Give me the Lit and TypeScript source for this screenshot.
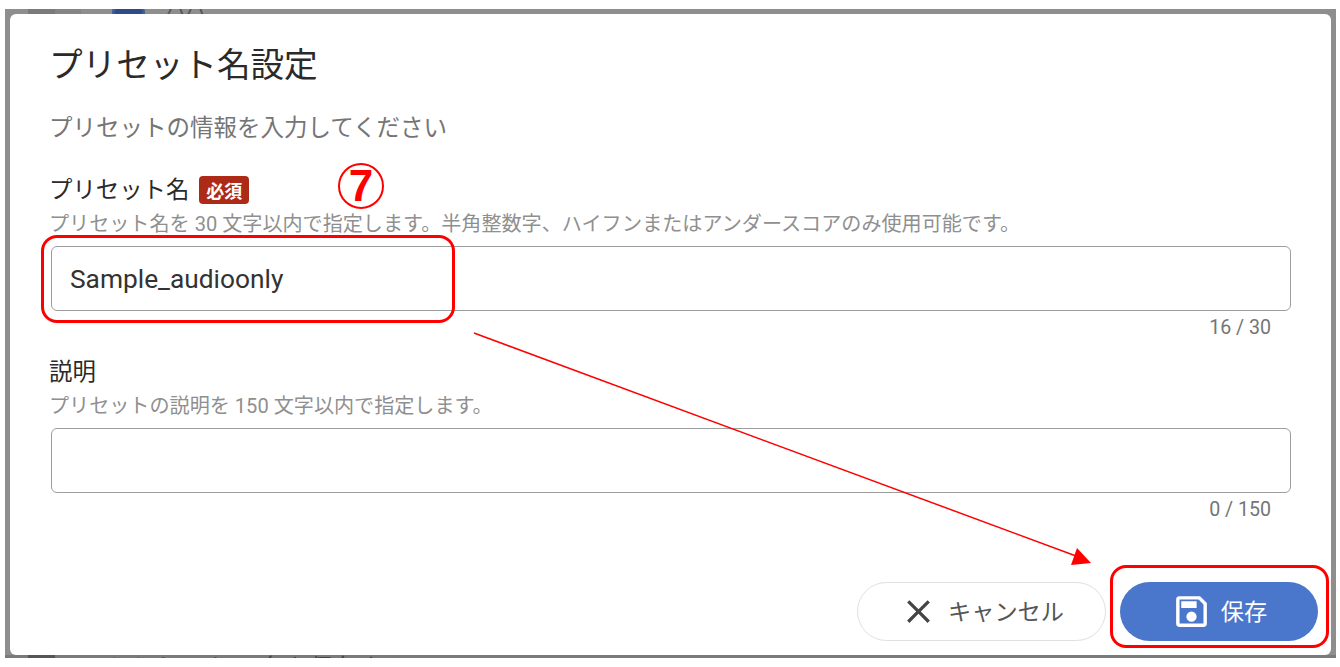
import { LitElement, html, css } from "lit";
import { customElement } from "lit/decorators.js";

@customElement("app-root")
export class AppRoot extends LitElement {
  static styles = css`
    :host {
      display: block;
      width: 1340px;
      height: 667px;
      background: #fff;
      position: relative;
      overflow: hidden;
      font-family: Roboto, "Noto Sans CJK JP", sans-serif;
    }
    .backdrop {
      position: absolute;
      left: 5px;
      top: 9px;
      width: 1331px;
      height: 649px;
      background: #8e8e8e;
      overflow: hidden;
    }
    .behind-top-a { position: absolute; left: 23px; top: 0; width: 27px; height: 5px; background: #7a7a7a; }
    .behind-top-b { position: absolute; left: 50px; top: 0; width: 26px; height: 5px; background: #858585; }
    .behind-top-c { position: absolute; left: 107px; top: -12px; width: 33px; height: 33px; box-sizing: border-box; border-radius: 50%; background: #2f4a86; border: 3px solid #3d5a9c; }
    .behind-top-t { position: absolute; left: 160px; top: -12px; font-size: 20px; line-height: 24px; color: #555; white-space: nowrap; }
    .behind-bottom { position: absolute; left: 0; right: 0; bottom: 0; height: 3px; background: #7a7a7a; overflow: hidden; }
    .behind-bottom-a { position: absolute; left: 23px; top: 0; width: 27px; height: 3px; background: #555; }
    .behind-bottom-t { position: absolute; left: 100px; top: -4px; font-size: 24px; line-height: 34px; color: #444; white-space: nowrap; }
    .dialog {
      position: absolute;
      left: 5px;
      top: 5px;
      width: 1321px;
      height: 641px;
      box-sizing: border-box;
      background: #fff;
      border-radius: 6px;
      padding: 29px 40px 14px 39px;
      display: flex;
      flex-direction: column;
    }
    h1 {
      margin: 0;
      font-size: 33.6px;
      line-height: 46px;
      font-weight: 400;
      color: #2a2a2a;
    }
    .sub {
      margin-top: 23px;
      font-size: 23.5px;
      line-height: 32px;
      color: #757575;
    }
    .label {
      display: flex;
      align-items: center;
      gap: 10px;
      font-size: 23.4px;
      line-height: 32px;
      color: #2a2a2a;
    }
    .label.first { margin-top: 30px; }
    .label.second { margin-top: 16px; }
    .badge {
      width: 50px;
      height: 28px;
      box-sizing: border-box;
      background: #ad2a16;
      color: #fff;
      border-radius: 4px;
      font-size: 18px;
      font-weight: 700;
      display: flex;
      align-items: center;
      justify-content: center;
      font-family: "Noto Sans CJK JP", sans-serif;
    }
    .help {
      font-size: 20.1px;
      line-height: 24px;
      color: #8f8f8f;
      margin-top: 6px;
      white-space: nowrap;
    }
    .field {
      margin-top: 10px;
      margin-left: 2px;
      height: 65px;
      box-sizing: border-box;
      border: 1.5px solid #9e9e9e;
      border-radius: 6px;
      padding: 0 18px;
      display: flex;
      align-items: center;
      font-size: 26.3px;
      color: #333;
    }
    .count {
      text-align: right;
      font-size: 19.6px;
      line-height: 24px;
      color: #757575;
      padding-right: 20px;
      margin-top: 5px;
    }
    .actions {
      margin-top: auto;
      display: flex;
      justify-content: flex-end;
      gap: 14px;
      margin-right: -27px;
    }
    .btn {
      height: 59px;
      border-radius: 30px;
      box-sizing: border-box;
      display: flex;
      align-items: center;
      justify-content: center;
      font-size: 23.2px;
    }
    .btn span { margin-bottom: 4px; }
    .cancel {
      width: 249px;
      border: 1.5px solid #e0e0e0;
      color: #555;
      gap: 10px;
    }
    .save {
      width: 198px;
      background: #4a76cb;
      color: #fff;
      gap: 9px;
    }
    .overlay { position: absolute; left: 0; top: 0; pointer-events: none; }
    .num {
      position: absolute;
      left: 338px;
      top: 163px;
      width: 46px;
      height: 46px;
      box-sizing: border-box;
      border: 2px solid #f00;
      border-radius: 50%;
      color: #f00;
      font-family: "Liberation Sans", sans-serif;
      font-weight: 700;
      font-size: 44px;
      line-height: 42px;
      text-align: center;
    }
    .ring {
      position: absolute;
      box-sizing: border-box;
      border: 3px solid #f00;
      border-radius: 16px;
    }
    .ring.a { left: 41px; top: 235px; width: 414px; height: 88px; }
    .ring.b { left: 1110px; top: 565px; width: 219px; height: 83px; }
  `;

  render() {
    return html`
      <div class="backdrop">
        <div class="behind-top-a"></div>
        <div class="behind-top-b"></div>
        <div class="behind-top-c"></div>
        <div class="behind-top-t">ハハ</div>
        <div class="behind-bottom">
          <div class="behind-bottom-a"></div>
          <div class="behind-bottom-t">トトキー セー 名を保存する</div>
        </div>
        <div class="dialog">
          <h1>プリセット名設定</h1>
          <div class="sub">プリセットの情報を入力してください</div>
          <div class="label first">プリセット名<span class="badge">必須</span></div>
          <div class="help">プリセット名を 30 文字以内で指定します。半角整数字、ハイフンまたはアンダースコアのみ使用可能です。</div>
          <div class="field">Sample_audioonly</div>
          <div class="count">16 / 30</div>
          <div class="label second">説明</div>
          <div class="help">プリセットの説明を 150 文字以内で指定します。</div>
          <div class="field"></div>
          <div class="count">0 / 150</div>
          <div class="actions">
            <div class="btn cancel">
              <svg width="39" height="39" viewBox="0 0 24 24"><path fill="#444" d="M19 6.41 17.59 5 12 10.59 6.41 5 5 6.41 10.59 12 5 17.59 6.41 19 12 13.41 17.59 19 19 17.59 13.41 12z"/></svg>
              <span>キャンセル</span>
            </div>
            <div class="btn save">
              <svg width="41" height="41" viewBox="0 0 24 24"><path fill="#fff" d="M17 3H5a2 2 0 0 0-2 2v14a2 2 0 0 0 2 2h14a2 2 0 0 0 2-2V7l-4-4zm2 16H5V5h11.17L19 7.83V19zm-7-7a3 3 0 1 0 0 6 3 3 0 0 0 0-6zM6 6h9v4H6z"/></svg>
              <span>保存</span>
            </div>
          </div>
        </div>
      </div>
      <div class="ring a"></div>
      <div class="ring b"></div>
      <div class="num">7</div>
      <svg class="overlay" width="1340" height="667" viewBox="0 0 1340 667">
        <line x1="474" y1="333" x2="1076" y2="556" stroke="#f00" stroke-width="1.5"/>
        <polygon points="1091,563 1071,565 1077,548" fill="#f00"/>
      </svg>
    `;
  }
}
